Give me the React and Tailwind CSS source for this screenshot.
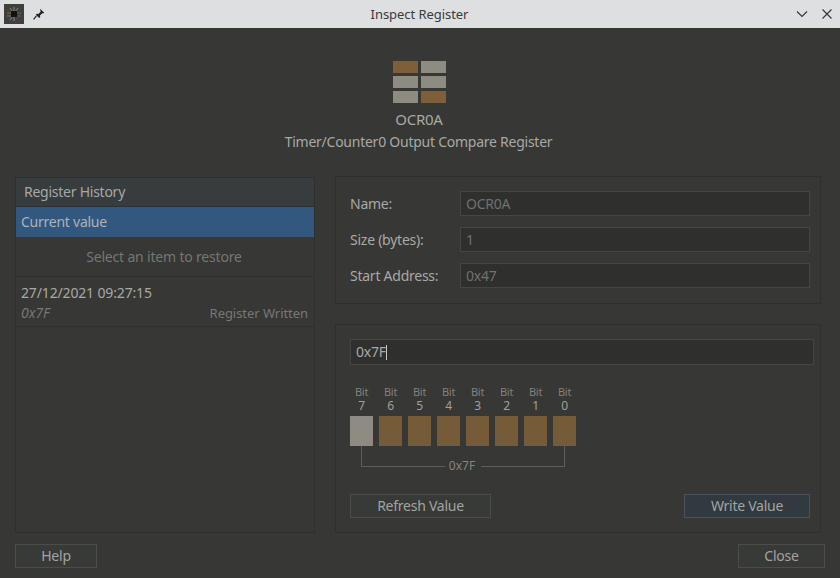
import React from "react";

const font = { fontFamily: '"Noto Sans", sans-serif' };

function Field({ label, value }) {
  return (
    <div className="flex items-center h-[25px]">
      <div className="w-[110px] text-[#a9a9a6]">{label}</div>
      <div className="w-[350px] h-[25px] flex items-center px-[5px] bg-[#2f2f2e] border border-[#454543] text-[#71716f]">{value}</div>
    </div>
  );
}

function Btn({ children, w, blue }) {
  return (
    <div className={`${w} h-[24px] flex items-center justify-center border ${blue ? "bg-[#323a41] border-[#4a525a]" : "bg-[#383a37] border-[#4c4d4a]"} text-[#a3a3a1]`}>
      {children}
    </div>
  );
}

const bits = [7, 6, 5, 4, 3, 2, 1, 0];

export default function App() {
  return (
    <div className="w-[840px] h-[578px] flex flex-col overflow-hidden bg-[#373735] text-[14px] leading-[18px] tracking-[-0.25px]" style={font}>
      <div className="h-[28px] shrink-0 flex items-center bg-[#dedfe1] text-[#3a3a3a] text-[13px] tracking-[-0.05px]">
        <div className="w-[20px] h-[20px] ml-[4px] bg-[#3f3f3d] flex items-center justify-center">
          <svg width="20" height="20" viewBox="0 0 20 20" fill="none">
            <path d="M6 4l3 4M14 4l-3 4M10 3v4" stroke="#8a8a80" />
            <path d="M3 9h5" stroke="#8a6a3a" />
            <path d="M12 9h5" stroke="#4a6a70" />
            <path d="M3 12h5" stroke="#7a7a60" />
            <path d="M12 12h5" stroke="#4a6a70" />
            <path d="M6 16l3-4M10 13v4" stroke="#8a8a80" />
            <path d="M14 16l-3-4" stroke="#8a3030" />
            <rect x="7" y="7" width="6" height="6" fill="#111" />
          </svg>
        </div>
        <svg className="ml-[9px]" width="12" height="12" viewBox="0 0 12 12">
          <path d="M7.2 0.8l4 4-1 .7-1-.2-2.2 2.2.2 1.6-1 1-3.4-3.4 1-1 1.6.2 2.2-2.2-.2-1z" fill="#222" />
          <path d="M3.4 7.8L0.6 11.4" stroke="#222" strokeWidth="1.2" />
        </svg>
        <div className="flex-1 text-center pl-[32px]">Inspect Register</div>
        <svg width="12" height="12" viewBox="0 0 12 12" fill="none" className="ml-[34px] mr-[13px]">
          <path d="M1 3.5l5 5 5-5" stroke="#333" strokeWidth="1.1" />
        </svg>
        <svg width="12" height="12" viewBox="0 0 12 12" fill="none" className="mr-[7px]">
          <path d="M1.5 1.5l9 9M10.5 1.5l-9 9" stroke="#333" strokeWidth="1.1" />
        </svg>
      </div>

      <div className="flex flex-col items-center pt-[33px] pr-[1px] shrink-0">
        <div className="grid grid-cols-[25px_25px] grid-rows-[12px_12px_12px] gap-x-[3px] gap-y-[3px]">
          <div className="bg-[#7e5f39]" />
          <div className="bg-[#8e8c82]" />
          <div className="bg-[#8e8c82]" />
          <div className="bg-[#8e8c82]" />
          <div className="bg-[#8e8c82]" />
          <div className="bg-[#7e5f39]" />
        </div>
        <div className="mt-[7px] pr-[1px] text-[#a9a9a6] h-[18px] text-[15px]">OCR0A</div>
        <div className="mt-[5px] text-[#a9a9a6] h-[18px] pr-[2px]">Timer/Counter0 Output Compare Register</div>
      </div>

      <div className="flex gap-[20px] ml-[15px] mt-[25px] h-[357px] shrink-0">
        <div className="w-[300px] mt-[1px] flex flex-col border border-[#2f2f2e]">
          <div className="h-[29px] shrink-0 flex items-center pl-[8px] bg-[#373c3e] border-b border-[#2d2f30] text-[#a6a8a6]">Register History</div>
          <div className="h-[31px] shrink-0 flex items-center pl-[5px] bg-[#33587f] border-b border-[#2c3a49] text-[#adb3b6]">Current value</div>
          <div className="h-[39px] shrink-0 flex items-center justify-center pr-[2px] tracking-[-0.18px] border-b border-[#2f2f2e] text-[#767674]">Select an item to restore</div>
          <div className="h-[50px] shrink-0 flex flex-col pt-[7px] px-[5px] border-b border-[#2f2f2e]">
            <div className="text-[#a9a9a6] tracking-[-0.15px]">27/12/2021 09:27:15</div>
            <div className="flex justify-between items-center mt-[3px] pr-[1px] text-[13px] leading-[16px] tracking-[-0.05px] text-[#787876]">
              <span className="italic text-[14px]">0x7F</span>
              <span>Register Written</span>
            </div>
          </div>
        </div>

        <div className="w-[486px] flex flex-col gap-[20px]">
          <div className="h-[128px] shrink-0 border border-[#2f2f2e] pl-[14px] pt-[14px] flex flex-col gap-[11px]">
            <Field label="Name:" value="OCR0A" />
            <Field label="Size (bytes):" value="1" />
            <Field label="Start Address:" value="0x47" />
          </div>
          <div className="h-[209px] shrink-0 border border-[#2f2f2e] pl-[14px] pt-[14px] flex flex-col">
            <div className="w-[464px] h-[26px] shrink-0 flex items-center px-[5px] bg-[#2f2f2e] border border-[#454543] text-[#a9a9a6]">
              0x7F<span className="w-px h-[15px] bg-[#c8c8c8]" />
            </div>
            <div className="flex gap-[6px] mt-[20px]">
              {bits.map((b, i) => (
                <div key={b} className="w-[23px] flex flex-col items-center">
                  <div className="text-[11px] leading-[14px] text-[#81817e]">Bit</div>
                  <div className="text-[12px] leading-[14px] text-[#a0a09d]">{b}</div>
                  <div className={`w-[23px] h-[30px] mt-[3px] ${i === 0 ? "bg-[#8e8c82]" : "bg-[#755b37]"}`} />
                </div>
              ))}
            </div>
            <div className="relative ml-[11px] w-[204px] h-[21px] border-x border-b border-[#5d5d5a]">
              <div className="absolute left-[83px] top-[13px] w-[36px] pr-[2px] text-center bg-[#373735] text-[12px] leading-[14px] tracking-[0px] text-[#858583]">0x7F</div>
            </div>
            <div className="flex justify-between w-[460px] mt-[27px]">
              <Btn w="w-[141px]">Refresh Value</Btn>
              <Btn w="w-[126px]" blue>Write Value</Btn>
            </div>
          </div>
        </div>
      </div>

      <div className="flex justify-between mx-[15px] mt-[11px]">
        <Btn w="w-[82px]">Help</Btn>
        <Btn w="w-[87px]">Close</Btn>
      </div>
    </div>
  );
}
